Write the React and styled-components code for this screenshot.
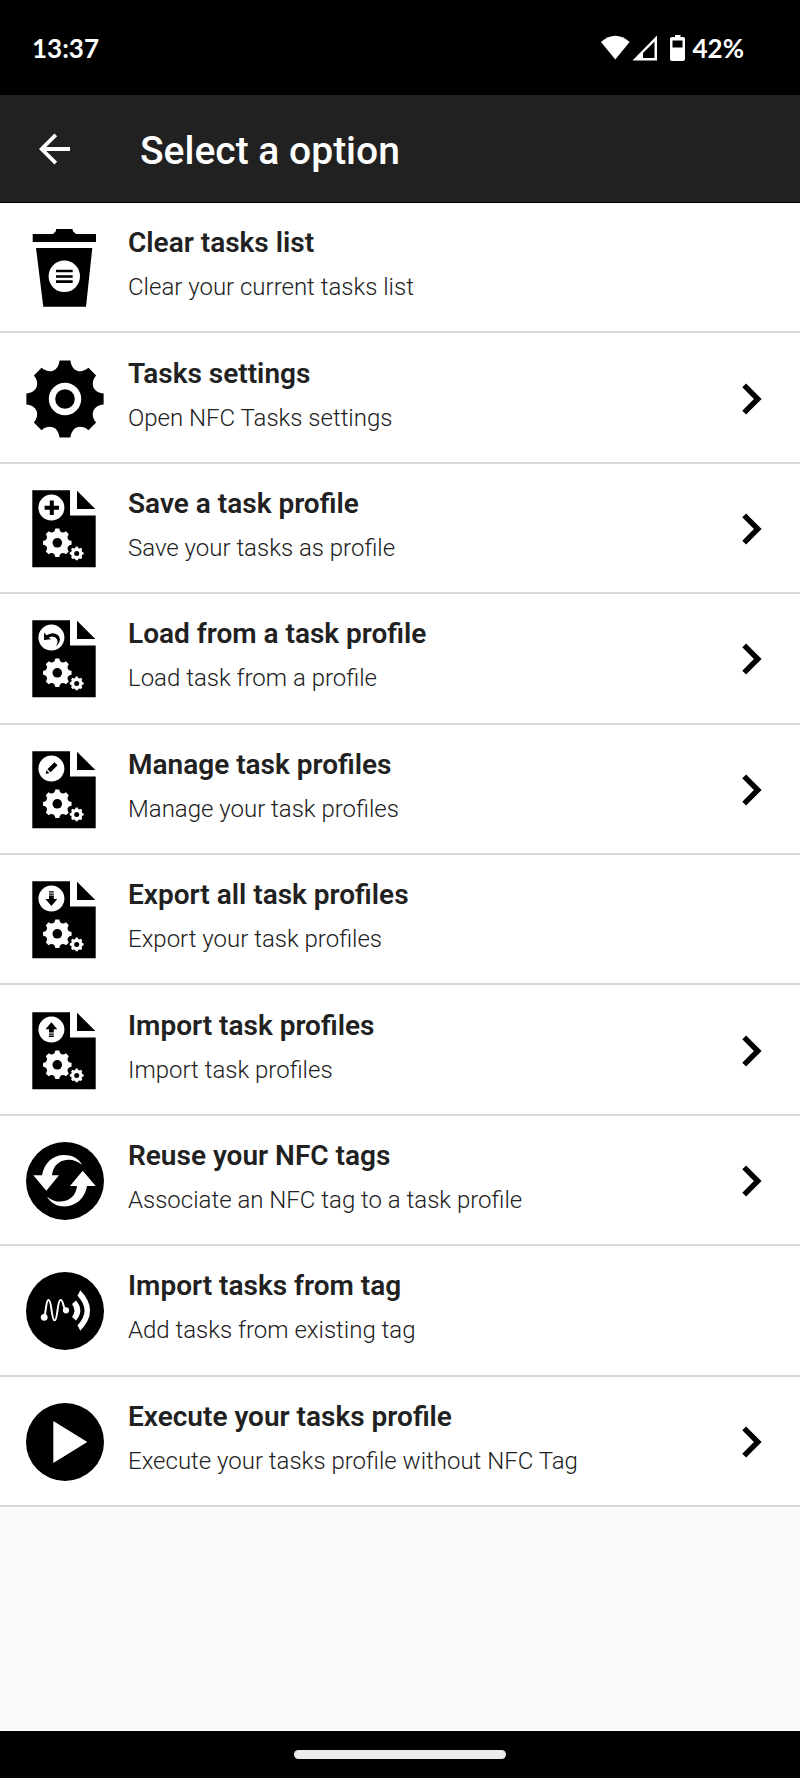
import React from 'react';
import styled, { createGlobalStyle } from 'styled-components';

const GlobalStyle = createGlobalStyle`
  * {
    box-sizing: border-box;
  }

  body {
    margin: 0;
    background: #fafafa;
    font-family: Roboto, sans-serif;
  }
`;

// cog outline with eight teeth, valleys follow a smooth curve
const cogPath = (cx, cy, r) => {
  const point = (radius, deg) => {
    const a = (deg * Math.PI) / 180;
    return `${(cx + radius * r * Math.sin(a)).toFixed(2)} ${(cy - radius * r * Math.cos(a)).toFixed(2)}`;
  };
  let d = `M${point(1, -8)}`;
  for (let i = 0; i < 8; i += 1) {
    const t = i * 45;
    d += `L${point(1, t + 8)}C${point(0.74, t + 13)} ${point(0.74, t + 32)} ${point(1, t + 37)}`;
  }
  return `${d}Z`;
};

const IconBase = ({ children }) => (
  <Icon viewBox="0 0 78 78" aria-hidden="true">{children}</Icon>
);

const TrashIcon = () => (
  <IconBase>
    <path d="M6.7 5H27L30 2V0H46.7V2L50 5H70V13H6.7ZM10 19H66.3L60 77.7H17.3Z" />
    <circle cx="38.3" cy="47.3" r="15.7" fill="#fff" />
    <path d="M30 42H46.7M30 47.5H46.7M30 52.7H46.7" stroke="#000" strokeWidth="2.7" />
  </IconBase>
);

const SettingsIcon = () => (
  <IconBase>
    <path d={cogPath(39, 39, 39)} />
    <circle cx="39" cy="39" r="13" fill="none" stroke="#fff" strokeWidth="6.4" />
  </IconBase>
);

const ProfileIcon = ({ children }) => (
  <IconBase>
    <path d="M6.3 0.3H44V25.6H69.7V77.3H6.3ZM51 0.7V19H69.3Z" />
    <circle cx="25.4" cy="17.6" r="13" fill="#fff" />
    {children}
    <path d={cogPath(31.3, 52.8, 14.4)} fill="#fff" />
    <circle cx="31.3" cy="52.8" r="4.8" />
    <path d={cogPath(50.7, 63.4, 7)} fill="#fff" />
    <circle cx="50.7" cy="63.4" r="2.5" />
  </IconBase>
);

const SaveIcon = () => (
  <ProfileIcon>
    <path d="M25.8 10.6V25M18.6 17.8H33" stroke="#000" strokeWidth="4" />
  </ProfileIcon>
);

const LoadIcon = () => (
  <ProfileIcon>
    <path d="M18 12.8V20L25 19.2L22.9 17.4Q28.6 15.2 31 19.2Q32.6 22.5 29.5 26.5Q36.4 21.5 32.6 15.8Q28.4 11 20.6 15.3Z" />
  </ProfileIcon>
);

const ManageIcon = () => (
  <ProfileIcon>
    <path d="M19.7 23L20.4 19.3L23.4 22.1ZM21.4 18.2L28.4 11.3L31.6 14.3L24.6 21.3Z" />
  </ProfileIcon>
);

const ExportIcon = () => (
  <ProfileIcon>
    <path d="M23 10.2H27.8V11.6H23ZM23 12.4H27.8V13.8H23ZM23 14.6H27.8V18H31.3L25.4 25L19.5 18H23Z" />
  </ProfileIcon>
);

const ImportIcon = () => (
  <ProfileIcon>
    <path d="M23 25H27.8V23.6H23ZM23 22.8H27.8V21.4H23ZM23 20.6H27.8V17.2H31.3L25.4 10.2L19.5 17.2H23Z" />
  </ProfileIcon>
);

const reuseArrow = 'M7.3 33.3H16C18 21 27 13 38 13C46 13 52 16 56 22.7C51 19 47 17.6 42 17.8C33 18.2 27 24 26 33.3H33L20.3 48.7Z';

const ReuseIcon = () => (
  <IconBase>
    <circle cx="39" cy="39" r="39" />
    <path d={reuseArrow} fill="#fff" />
    <path d={reuseArrow} fill="#fff" transform="rotate(180 38.5 38.7)" />
  </IconBase>
);

const TagIcon = () => (
  <IconBase>
    <circle cx="39" cy="39" r="39" />
    <path
      d="M18 45.3C20.3 42 19.5 28 22.5 28C26 28 25.2 48.3 28.6 48.3C32 48.3 31 28 34.6 28C37.8 28 36.8 37 40 38.3"
      fill="none"
      stroke="#fff"
      strokeWidth="2"
    />
    <circle cx="18.2" cy="45.3" r="3.4" fill="#fff" />
    <circle cx="40" cy="38.3" r="3.1" fill="#fff" />
    <path
      d="M46 32L50 28.5Q58.6 38.5 50 48.5L46 45Q50.8 38.5 46 32ZM54.3 18.3Q73.9 38.5 54.3 58.7L51.5 53.3Q65.5 38.5 51.5 23.7Z"
      fill="#fff"
    />
  </IconBase>
);

const PlayIcon = () => (
  <IconBase>
    <circle cx="39" cy="39" r="39" />
    <path d="M27.3 18L61.3 39L27.3 60Z" fill="#fff" />
  </IconBase>
);

const options = [
  { title: 'Clear tasks list', text: 'Clear your current tasks list', icon: TrashIcon },
  { title: 'Tasks settings', text: 'Open NFC Tasks settings', icon: SettingsIcon, more: true },
  { title: 'Save a task profile', text: 'Save your tasks as profile', icon: SaveIcon, more: true },
  { title: 'Load from a task profile', text: 'Load task from a profile', icon: LoadIcon, more: true },
  { title: 'Manage task profiles', text: 'Manage your task profiles', icon: ManageIcon, more: true },
  { title: 'Export all task profiles', text: 'Export your task profiles', icon: ExportIcon },
  { title: 'Import task profiles', text: 'Import task profiles', icon: ImportIcon, more: true },
  { title: 'Reuse your NFC tags', text: 'Associate an NFC tag to a task profile', icon: ReuseIcon, more: true },
  { title: 'Import tasks from tag', text: 'Add tasks from existing tag', icon: TagIcon },
  { title: 'Execute your tasks profile', text: 'Execute your tasks profile without NFC Tag', icon: PlayIcon, more: true },
];

const Option = ({ title, text, icon: OptionIcon, more }) => (
  <OptionRow>
    <OptionButton type="button">
      <OptionIcon />
      <OptionBody>
        <OptionTitle>{title}</OptionTitle>
        <OptionText>{text}</OptionText>
      </OptionBody>
      {more && (
        <Chevron viewBox="0 0 20 32" aria-hidden="true">
          <path d="M2.2 2.3L15.8 16L2.2 29.7" />
        </Chevron>
      )}
    </OptionButton>
  </OptionRow>
);

const App = () => (
  <Screen>
    <GlobalStyle />
    <StatusBar>
      <span>13:37</span>
      <StatusIcons>
        <svg width="84" height="26" viewBox="0 0 84 26" fill="#fff" aria-hidden="true">
          <path d="M0 7Q14.3 -5.4 28.6 7L14.3 24.6Z" />
          <path d="M31.5 25.5L56 0.5V25.5ZM53.5 6.5L42 18V23H53.5Z" fillRule="evenodd" />
          <path d="M74 0H79.5V2H82Q84 2 84 4V24Q84 26 82 26H71Q69 26 69 24V4Q69 2 71 2H74ZM71.5 5.5V12.5H81.5V5.5Z" fillRule="evenodd" />
        </svg>
        <span>42%</span>
      </StatusIcons>
    </StatusBar>
    <Toolbar>
      <BackButton type="button" aria-label="Back">
        <svg width="32" height="32" viewBox="0 0 32 32" fill="none" stroke="#fff" strokeWidth="3.8" aria-hidden="true">
          <path d="M31 16H3M16.8 1.8L2.6 16L16.8 30.2" />
        </svg>
      </BackButton>
      <h1>Select a option</h1>
    </Toolbar>
    <OptionList>
      {options.map((option) => (
        <Option key={option.title} {...option} />
      ))}
    </OptionList>
    <NavigationBar>
      <HomeHandle />
    </NavigationBar>
  </Screen>
);

const Screen = styled.div`
  display: flex;
  flex-direction: column;
  min-height: 100vh;
`;

const StatusBar = styled.header`
  display: flex;
  align-items: center;
  justify-content: space-between;
  height: 95px;
  padding: 0 56px 0 32px;
  background: #000;
  color: #fff;
  font-family: Lato, sans-serif;
  font-size: 26px;
  font-weight: 700;
  line-height: 32px;
`;

const StatusIcons = styled.div`
  display: flex;
  align-items: center;
  gap: 8px;
`;

const Toolbar = styled.div`
  display: flex;
  align-items: center;
  gap: 69px;
  height: 108px;
  padding: 0 39px;
  background: #212121;
  border-bottom: 1px solid #000;

  h1 {
    margin: 0;
    padding-top: 5px;
    color: #fff;
    font-size: 39px;
    font-weight: 500;
    line-height: 48px;
  }
`;

const BackButton = styled.button`
  display: flex;
  padding: 0;
  border: 0;
  background: none;
  cursor: pointer;
`;

const OptionList = styled.ul`
  display: grid;
  grid-auto-rows: 1fr;
  min-height: 1304px;
  margin: 0;
  padding: 0;
  list-style: none;
  background: #fff;
`;

const OptionRow = styled.li`
  display: flex;
  border-bottom: 2px solid #d9d9d9;
`;

const OptionButton = styled.button`
  display: flex;
  align-items: center;
  width: 100%;
  padding: 2px 38px 0 26px;
  border: 0;
  background: none;
  color: #212121;
  font-family: inherit;
  text-align: left;
  cursor: pointer;
`;

const Icon = styled.svg`
  flex: none;
  width: 78px;
  height: 78px;
`;

const OptionBody = styled.span`
  display: flex;
  flex: 1;
  flex-direction: column;
  gap: 12px;
  padding: 0 24px 6px;
`;

const OptionTitle = styled.span`
  font-size: 28px;
  font-weight: 600;
  line-height: 32px;
`;

const OptionText = styled.span`
  font-size: 24px;
  font-weight: 300;
  line-height: 32px;
`;

const Chevron = styled.svg`
  flex: none;
  width: 20px;
  height: 32px;
  fill: none;
  stroke: #000;
  stroke-width: 5.4;
`;

const NavigationBar = styled.footer`
  display: flex;
  align-items: center;
  justify-content: center;
  height: 47px;
  margin-top: auto;
  background: #000;
`;

const HomeHandle = styled.div`
  width: 212px;
  height: 9px;
  border-radius: 5px;
  background: #ebebeb;
`;

export default App;
